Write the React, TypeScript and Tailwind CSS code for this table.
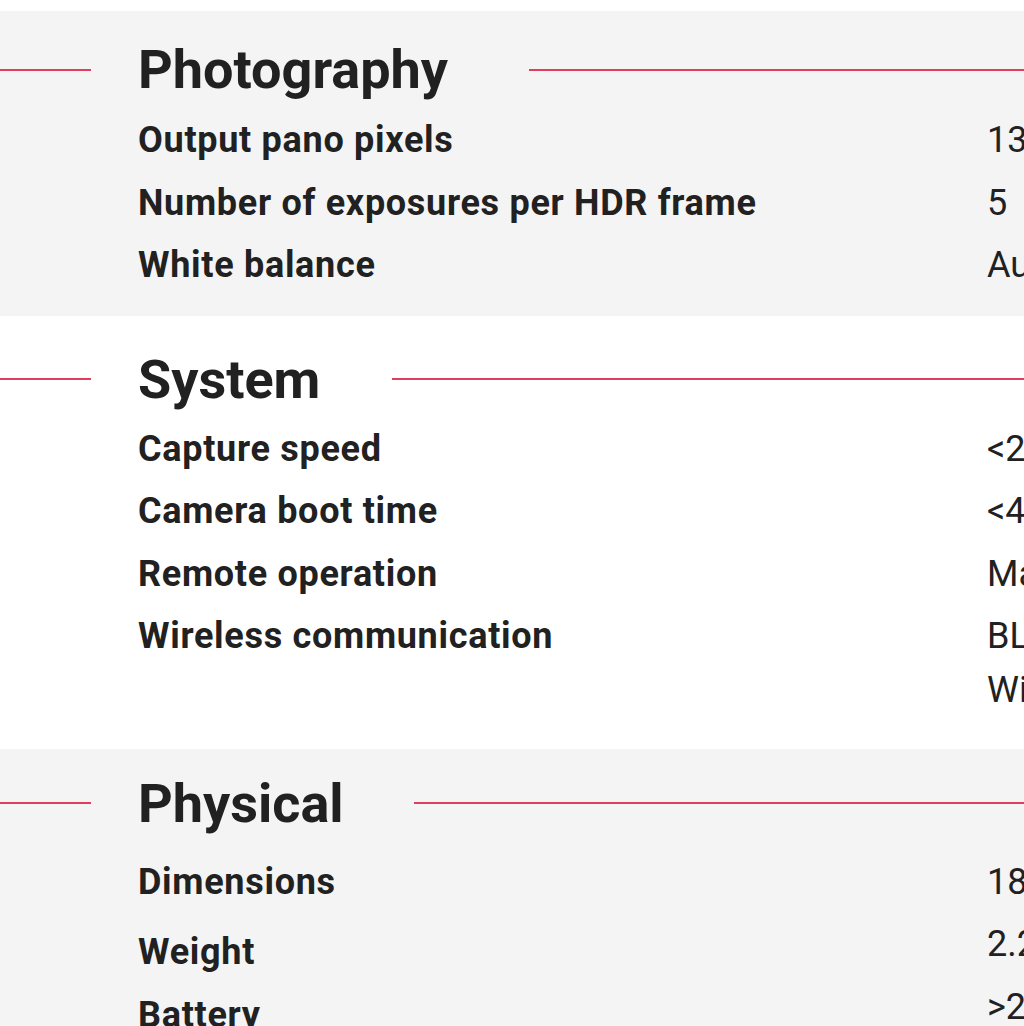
const SECTIONS = [
  {
    title: "Photography",
    tone: "bg-[#f4f4f4]",
    head: "pt-[26px] pb-[7px]",
    gap: "mr-[81px]",
    bottom: "pb-[19px]",
    rows: [
      { label: "Output pano pixels", value: ["134 megapixels"] },
      { label: "Number of exposures per HDR frame", value: ["5"] },
      { label: "White balance", value: ["Auto"] },
    ],
  },
  {
    title: "System",
    tone: "bg-white",
    head: "pt-[31px] pb-[6px]",
    gap: "mr-[72px]",
    bottom: "pb-[27px]",
    rows: [
      { label: "Capture speed", value: ["<20 seconds per scan"] },
      { label: "Camera boot time", value: ["<40 seconds"] },
      { label: "Remote operation", value: ["Matterport Capture app"] },
      { label: "Wireless communication", value: ["BLE 5.0", "WiFi 802.11 ac"] },
    ],
  },
  {
    title: "Physical",
    tone: "bg-[#f4f4f4]",
    head: "pt-[22px] pb-[15px]",
    gap: "mr-[70px]",
    bottom: "pb-[24px]",
    rows: [
      { label: "Dimensions", value: ["183 x 114 x 237 mm"] },
      { label: "Weight", value: ["2.2 kg"], shift: true },
      { label: "Battery", value: [">2 hours"] },
    ],
  },
];

function Section({ s }: { s: (typeof SECTIONS)[number] }) {
  return (
    <section className={`${s.tone} ${s.bottom} w-full overflow-hidden`}>
      {/* heading with red rules either side */}
      <div className={`flex items-center ${s.head}`}>
        <div className="h-[2px] w-[91px] shrink-0 bg-[#e23d5f]" />
        <h2 className={`ml-[47px] ${s.gap} shrink-0 text-[54px] font-bold leading-[65px] text-[#212121]`}>
          {s.title}
        </h2>
        <div className="h-[2px] flex-1 bg-[#e23d5f]" />
      </div>

      <div className="flex pl-[138px]">
        <div className="flex w-[849px] shrink-0 flex-col">
          {s.rows.map((r) => (
            <div
              key={r.label}
              className={`py-[4.25px] text-[36px] font-bold leading-[54px] tracking-[0.7px] text-[#212121] ${
                "shift" in r && r.shift ? "mt-[8px]" : ""
              }`}
              style={{ minHeight: r.value.length * 54 + 8.5 }}
            >
              {r.label}
            </div>
          ))}
        </div>
        <div className="flex w-[420px] shrink-0 flex-col">
          {s.rows.map((r) => (
            <div key={r.label} className="py-[4.25px] text-[36px] leading-[54px] text-[#212121]">
              {r.value.map((v) => (
                <div key={v} className="whitespace-nowrap">
                  {v}
                </div>
              ))}
            </div>
          ))}
        </div>
      </div>
    </section>
  );
}

export default function App() {
  return (
    <div className="h-[1026px] w-[1024px] overflow-hidden bg-white pt-[11px] font-['Roboto',sans-serif]">
      {SECTIONS.map((s) => (
        <Section key={s.title} s={s} />
      ))}
    </div>
  );
}
